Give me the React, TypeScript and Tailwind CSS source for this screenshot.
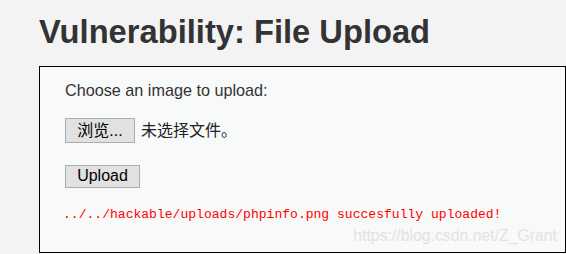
export default function App() {
  return (
    <div className="w-[566px] h-[254px] overflow-hidden bg-[#f3f3f3] font-['Liberation_Sans',Arial,sans-serif] text-[#333]">
      <div className="pl-[39px] pt-[12px]">
        <h1 className="text-[32.7px] leading-[40px] font-bold text-[#333]">
          Vulnerability: File Upload
        </h1>
        <div className="relative mt-[14px] h-[187px] border border-black bg-[#f8f9f9] pl-[25px] pt-[13px]">
          <p className="text-[16.2px] leading-[20px] text-[#333]">Choose an image to upload:</p>
          <div className="mt-[18px] flex items-center gap-[6px]">
            <button className="h-[25px] w-[70px] border border-[#adadad] bg-[#e1e1e1] text-[16px] leading-none text-black font-['Liberation_Sans','Noto_Sans_CJK_SC',sans-serif]">
              浏览...
            </button>
            <span className="text-[16px] text-[#222] font-['Liberation_Sans','Noto_Sans_CJK_SC',sans-serif]">
              未选择文件。
            </span>
          </div>
          <div className="mt-[21px]">
            <button className="h-[23px] w-[75px] border border-[#adadad] bg-[#e1e1e1] text-[16px] leading-none text-black">
              Upload
            </button>
          </div>
          <pre className="-ml-[2px] mt-[19px] font-['Liberation_Mono',monospace] text-[13.05px] leading-[16px] text-[#ff0000]">
            ../../hackable/uploads/phpinfo.png succesfully uploaded!
          </pre>
          <div className="absolute right-[8px] bottom-[4px] text-[15.8px] text-[#e2e2e2]">
            https://blog.csdn.net/Z_Grant
          </div>
        </div>
      </div>
    </div>
  );
}
